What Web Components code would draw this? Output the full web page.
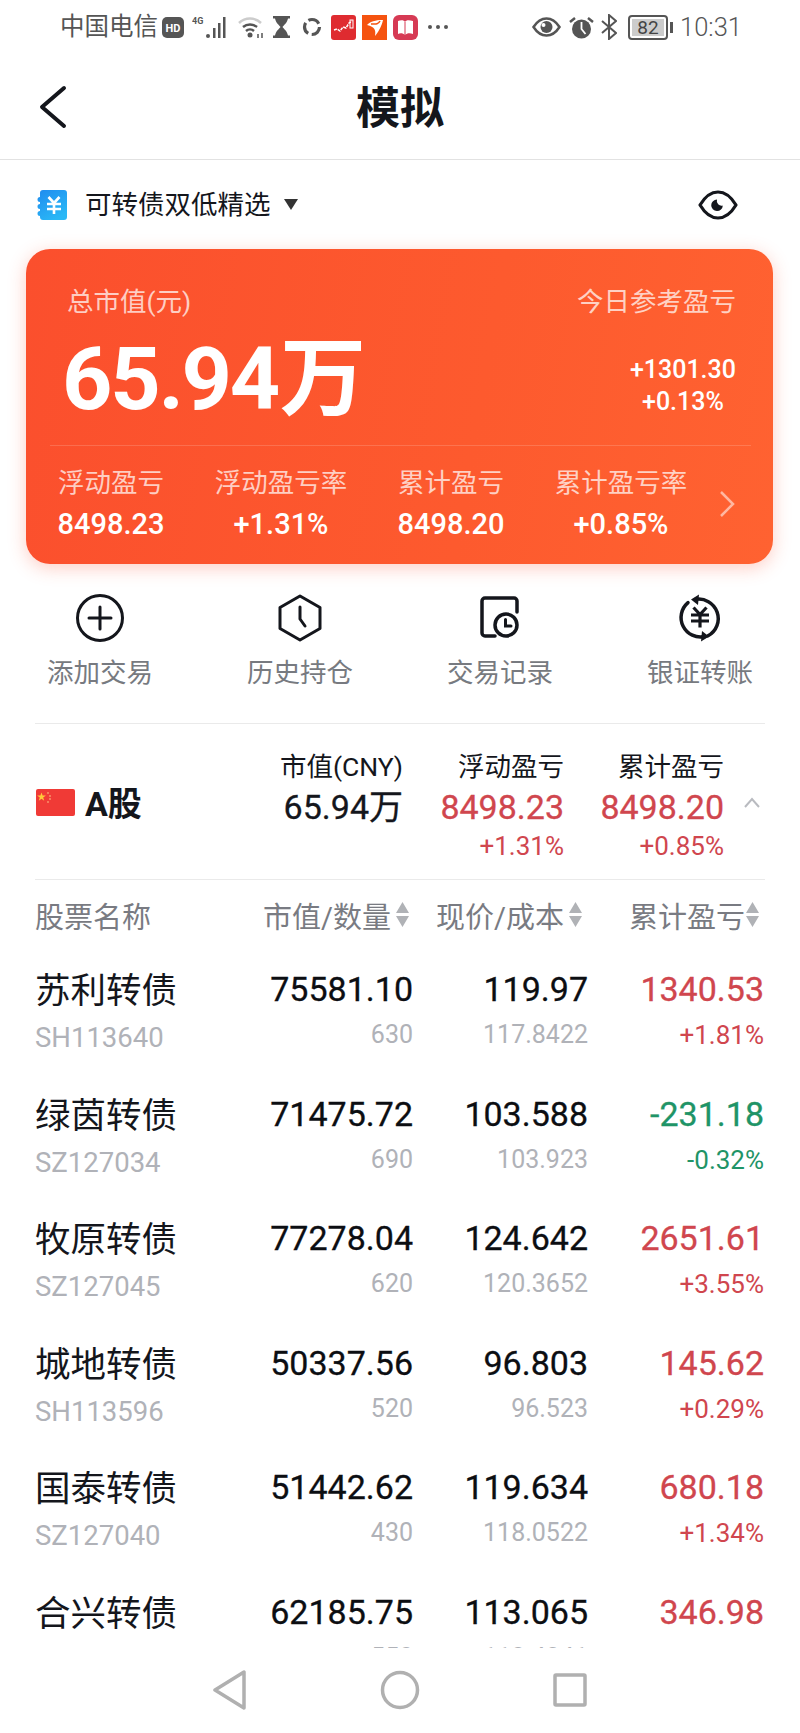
<!DOCTYPE html>
<html lang="zh">
<head>
<meta charset="utf-8">
<title>模拟</title>
<style>
    html, body { margin: 0; height: 100%; background: #fff; }
    body {
        width: 800px;
        height: 1733px;
        overflow: hidden;
        display: flex;
        flex-direction: column;
        font-family: Roboto, "Noto Sans CJK SC", sans-serif;
        color: #14161c;
    }
    .scroller { flex: 1; min-height: 0; overflow: hidden; padding: 0 35px 0 35px; }
</style>
</head>
<body>
    <status-bar></status-bar>
    <app-header>模拟</app-header>
    <portfolio-select>可转债双低精选</portfolio-select>
    <summary-card></summary-card>
    <action-bar></action-bar>
    <market-summary></market-summary>
    <table-head></table-head>
    <div class="scroller">
        <stock-row code="SH113640" value="75581.10" qty="630" price="119.97" cost="117.8422" pl="1340.53" pct="+1.81%">苏利转债</stock-row>
        <stock-row code="SZ127034" value="71475.72" qty="690" price="103.588" cost="103.923" pl="-231.18" pct="-0.32%" tone="down">绿茵转债</stock-row>
        <stock-row code="SZ127045" value="77278.04" qty="620" price="124.642" cost="120.3652" pl="2651.61" pct="+3.55%">牧原转债</stock-row>
        <stock-row code="SH113596" value="50337.56" qty="520" price="96.803" cost="96.523" pl="145.62" pct="+0.29%">城地转债</stock-row>
        <stock-row code="SZ127040" value="51442.62" qty="430" price="119.634" cost="118.0522" pl="680.18" pct="+1.34%">国泰转债</stock-row>
        <stock-row code="" value="62185.75" qty="550" price="113.065" cost="112.4341" pl="346.98" pct="+0.56%">合兴转债</stock-row>
    </div>
    <nav-bar></nav-bar>

<script>
class StatusBar extends HTMLElement {
    constructor() {
        super();
        this.attachShadow({ mode: 'open' }).innerHTML = `
            <style>
                :host { display: flex; align-items: center; height: 54px; padding: 0 58px 0 60px; color: #555; flex: none; box-sizing: border-box; }
                .carrier { font-size: 24.500px; line-height: 54px; width: 100px; }
                .time { font-size: 25.500px; margin-left: 6px; font-weight: 300; }
                svg { display: block; flex: none; }
                .spacer { flex: 1; }
            </style>
            <span class="carrier">中国电信</span>
            <svg width="22" height="21" viewBox="0 0 22 21" style="margin-left:2px"><rect width="22" height="21" rx="5" fill="#555"/><text x="11" y="15" font-size="11" font-weight="700" fill="#fff" text-anchor="middle" font-family="Roboto">HD</text></svg>
            <svg width="38" height="24" viewBox="0 0 38 24" style="margin-left:8px"><text x="0" y="9" font-size="9" font-weight="700" fill="#555" font-family="Roboto">4G</text><g fill="#555"><circle cx="16" cy="21" r="2"/><rect x="21" y="13" width="2.500" height="10"/><rect x="26" y="8" width="2.500" height="15"/><rect x="31" y="2" width="2.500" height="21"/></g></svg>
            <svg width="28" height="24" viewBox="0 0 28 24" style="margin-left:7px" fill="none"><path d="M2 8 A16 16 0 0 1 24 8" stroke="#ccc" stroke-width="2.500"/><path d="M6 12 A11 11 0 0 1 20 12" stroke="#555" stroke-width="2.500"/><path d="M9 16 A6 6 0 0 1 17 16" stroke="#555" stroke-width="2.500"/><circle cx="13" cy="20" r="2.500" fill="#555"/><path d="M21 19v4M25 18v5" stroke="#555" stroke-width="1.500"/></svg>
            <svg width="17" height="24" viewBox="0 0 17 24" style="margin-left:8px"><path d="M0 1h17v2.500h-2C14 8 11 10 9.500 12 11 14 14 16 15 20.500h2V23H0v-2.500h2C3 16 6 14 7.500 12 6 10 3 8 2 3.500H0z" fill="#555"/></svg>
            <svg width="20" height="20" viewBox="0 0 20 20" style="margin-left:12px" fill="none" stroke="#555" stroke-width="3.200"><circle cx="10" cy="10" r="7.500" stroke-dasharray="12 3.700"/></svg>
            <svg width="25" height="25" viewBox="0 0 25 25" style="margin-left:9px"><rect width="25" height="25" rx="3" fill="#df2b30"/><path d="M3 15l3-1 3 2 3-4 3 1 3-5 3-2" stroke="#fff" stroke-width="1.500" fill="none" stroke-dasharray="3 1"/><rect x="19" y="5" width="3" height="8" fill="none" stroke="#fff"/></svg>
            <svg width="25" height="25" viewBox="0 0 25 25" style="margin-left:6px"><rect width="25" height="25" fill="#f5530f"/><path d="M5 10C10 5 17 5 21 5 20 11 15 19 13 21 14 15 13 12 5 10z" fill="#fff"/><path d="M9 9c4 0 7 1 9-3" stroke="#f5530f" stroke-width="1.500" fill="none"/></svg>
            <svg width="25" height="25" viewBox="0 0 25 25" style="margin-left:6px"><rect width="25" height="25" rx="6" fill="#d63a54"/><path d="M5 6c3-1 6-1 7 1 1-2 4-2 8-1v13c-3-1-6-1-8 1-2-2-5-2-7-1z" fill="#fff"/><path d="M12 7v13" stroke="#d63a54"/></svg>
            <svg width="20" height="4" viewBox="0 0 20 4" style="margin-left:10px" fill="#555"><circle cx="2" cy="2" r="2"/><circle cx="10" cy="2" r="2"/><circle cx="18" cy="2" r="2"/></svg>
            <span class="spacer"></span>
            <svg width="29" height="20" viewBox="0 0 29 20"><path d="M1.500 10C6 3 10 1.500 14.500 1.500S23 3 27.500 10C23 17 19 18.500 14.500 18.500S6 17 1.500 10z" fill="none" stroke="#555" stroke-width="2.500"/><circle cx="14.500" cy="10" r="6" fill="#555"/><circle cx="11.500" cy="8" r="2" fill="#fff"/></svg>
            <svg width="25" height="25" viewBox="0 0 25 25" style="margin-left:8px"><circle cx="12.500" cy="14" r="9.500" fill="#555"/><path d="M12.500 7v7l4 5" stroke="#fff" stroke-width="1.800" fill="none"/><path d="M1 7l5-4M24 7l-5-4" stroke="#555" stroke-width="2.500"/></svg>
            <svg width="16" height="26" viewBox="0 0 16 26" style="margin-left:7px" fill="none" stroke="#555" stroke-width="2"><path d="M1 7l14 12-7 6V1l7 6L1 19"/></svg>
            <svg width="46" height="25" viewBox="0 0 46 25" style="margin-left:11px"><rect x="1" y="1" width="38" height="23" rx="3" fill="#fff" stroke="#555" stroke-width="2"/><rect x="4" y="4" width="32" height="17" fill="#ccc"/><text x="20" y="19" font-size="19" fill="#444" text-anchor="middle" font-family="Roboto">82</text><rect x="42" y="7" width="3" height="11" fill="#555"/></svg>
            <span class="time">10:31</span>
        `;
    }
}

class AppHeader extends HTMLElement {
    constructor() {
        super();
        this.attachShadow({ mode: 'open' }).innerHTML = `
            <style>
                :host { display: flex; align-items: flex-start; justify-content: center; position: relative; height: 105px; flex: none; border-bottom: 1px solid #e2e2e2; }
                .title { display: block; font-size: 44px; font-weight: 700; line-height: 99px; padding-top: 6px; }
                svg { position: absolute; left: 38px; top: 31px; }
            </style>
            <svg width="30" height="44" viewBox="0 0 30 44" fill="none" stroke="#14161c" stroke-width="4" stroke-linecap="round" stroke-linejoin="round"><path d="M26 3 4 22l22 19"/></svg>
            <span class="title"><slot></slot></span>
        `;
    }
}

class PortfolioSelect extends HTMLElement {
    constructor() {
        super();
        this.attachShadow({ mode: 'open' }).innerHTML = `
            <style>
                :host { display: flex; align-items: center; height: 89px; padding: 0 62px 0 37px; flex: none; }
                .name { font-size: 26.500px; margin-left: 18px; line-height: 40px; }
                .caret { margin-left: 13px; }
                .spacer { flex: 1; }
                svg { display: block; }
            </style>
            <svg width="30" height="30" viewBox="0 0 30 30">
                <defs><linearGradient id="tk" x1="0" y1="0" x2=".6" y2="1"><stop offset="0" stop-color="#1f8bef"/><stop offset="1" stop-color="#2ab8f6"/></linearGradient></defs>
                <path d="M6 0h21a3 3 0 0 1 3 3v24a3 3 0 0 1-3 3H6a3 3 0 0 1-3-3v-1a2.500 2.500 0 0 1 0-5v-2a2.500 2.500 0 0 1 0-5v-2a2.500 2.500 0 0 1 0-5V3a3 3 0 0 1 3-3z" fill="url(#tk)"/>
                <path d="M11.500 7l5.500 6 5.500-6M10 14h14M10 19h14M17 13v11" fill="none" stroke="#fff" stroke-width="2.600"/>
            </svg>
            <span class="name"><slot></slot></span>
            <svg class="caret" width="14" height="11" viewBox="0 0 14 11"><path d="M0 0h14L7 11z" fill="#333"/></svg>
            <span class="spacer"></span>
            <svg width="40" height="30" viewBox="0 0 40 30" fill="none"><path d="M2 15C8 5 14 2 20 2s12 3 18 13c-6 10-12 13-18 13S8 25 2 15z" stroke="#14161c" stroke-width="3.200" stroke-linejoin="round"/><path d="M19 9.500a5.800 5.800 0 1 0 5.800 6 4.800 4.800 0 0 1-5.800-6z" fill="#14161c"/></svg>
        `;
    }
}

class SummaryStat extends HTMLElement {
    constructor() {
        super();
        this.attachShadow({ mode: 'open' }).innerHTML = `
            <style>
                :host { display: block; text-align: center; }
                .label { font-size: 26.500px; line-height: 36px; color: rgba(255,255,255,.72); }
                .value { font-size: 29px; line-height: 36px; margin-top: 5px; font-weight: 500; color: #fff; }
            </style>
            <div class="label"></div>
            <div class="value"><slot></slot></div>
        `;
        this.shadowRoot.querySelector('.label').textContent = this.getAttribute('label');
    }
}

class SummaryCard extends HTMLElement {
    constructor() {
        super();
        this.attachShadow({ mode: 'open' }).innerHTML = `
            <style>
                :host { display: block; flex: none; box-sizing: border-box; width: 747px; height: 315px; margin-left: 26px; border-radius: 24px; color: #fff;
                    background: linear-gradient(100deg, #fb4f2d 0%, #fd5a2e 60%, #ff6231 100%);
                    box-shadow: 0 4px 18px rgba(251, 80, 45, .28); }
                .top { display: flex; justify-content: space-between; padding: 35px 37px 0 41px; height: 161px; box-sizing: content-box; }
                .label { font-size: 26.500px; line-height: 36px; color: rgba(255,255,255,.72); }
                .big { display: flex; align-items: baseline; font-size: 88px; font-weight: 700; line-height: 90px; margin: 14px 0 0 -5px; letter-spacing: -2.300px; }
                .big .unit { font-size: 86px; letter-spacing: 0; margin-left: 2px; }
                .right { text-align: right; }
                .todays { display: inline-block; text-align: center; margin-top: 34px; }
                .today { font-size: 25px; font-weight: 500; line-height: 32px; }
                hr { border: 0; height: 1px; background: rgba(255,255,255,.16); margin: 0 22px 0 24px; }
                .stats { display: grid; grid-template-columns: repeat(4, 170px) 1fr; padding-top: 19px; position: relative; }
                .arrow { justify-self: start; align-self: center; margin-left: 12px; }
            </style>
            <div class="top">
                <div>
                    <div class="label">总市值(元)</div>
                    <div class="big">65.94<span class="unit">万</span></div>
                </div>
                <div class="right">
                    <div class="label">今日参考盈亏</div>
                    <div class="todays">
                        <div class="today">+1301.30</div>
                        <div class="today">+0.13%</div>
                    </div>
                </div>
            </div>
            <hr>
            <div class="stats">
                <summary-stat label="浮动盈亏">8498.23</summary-stat>
                <summary-stat label="浮动盈亏率">+1.31%</summary-stat>
                <summary-stat label="累计盈亏">8498.20</summary-stat>
                <summary-stat label="累计盈亏率">+0.85%</summary-stat>
                <svg class="arrow" width="18" height="28" viewBox="0 0 18 28" fill="none" stroke="rgba(255,255,255,.55)" stroke-width="2.500"><path d="M3 2l12 12L3 26"/></svg>
            </div>
        `;
    }
}

class ActionItem extends HTMLElement {
    constructor() {
        super();
        this.attachShadow({ mode: 'open' }).innerHTML = `
            <style>
                :host { display: flex; flex-direction: column; align-items: center; }
                .icon { height: 50px; }
                .label { font-size: 26.500px; line-height: 36px; color: #777a80; margin-top: 12px; }
            </style>
            <div class="icon"><slot name="icon"></slot></div>
            <div class="label"><slot></slot></div>
        `;
    }
}

class ActionBar extends HTMLElement {
    constructor() {
        super();
        this.attachShadow({ mode: 'open' }).innerHTML = `
            <style>
                :host { display: grid; grid-template-columns: repeat(4, 200px); flex: none; box-sizing: content-box; height: 130px; padding-top: 29px; }
                svg { display: block; }
            </style>
            <action-item>
                <svg slot="icon" width="50" height="50" viewBox="0 0 50 50" fill="none" stroke="#14161c" stroke-width="3"><circle cx="25" cy="25" r="22.500"/><path d="M14 25h22M25 14v22" stroke-linecap="round"/></svg>
                添加交易
            </action-item>
            <action-item>
                <svg slot="icon" width="50" height="50" viewBox="0 0 50 50" fill="none" stroke="#14161c" stroke-width="3" stroke-linejoin="round"><path d="M25 3l20 11.500v21L25 47 5 35.500v-21z"/><path d="M25 14v12l5 7" stroke-linecap="round"/></svg>
                历史持仓
            </action-item>
            <action-item>
                <svg slot="icon" width="50" height="50" viewBox="0 0 50 50" fill="none" stroke="#14161c" stroke-width="3.500" stroke-linecap="round"><path d="M20 43h-10a3 3 0 0 1-3-3V8a3 3 0 0 1 3-3h29a3 3 0 0 1 3 3v11"/><circle cx="31" cy="32" r="11"/><path d="M30.500 26.500v6.500h5.500" stroke-width="3"/></svg>
                交易记录
            </action-item>
            <action-item>
                <svg slot="icon" width="50" height="50" viewBox="0 0 50 50" fill="none" stroke="#14161c" stroke-width="3.500" stroke-linecap="round"><path d="M20 6.500A19.500 19.500 0 0 1 33 42.800"/><path d="M30 43.500A19.500 19.500 0 0 1 13 9.600"/><path d="M24 1.500 16 6.500l7 5.500zM26 48.500l8-5-7-5.500z" fill="#14161c" stroke="none"/><path d="M18.500 14.500l6.500 7 6.500-7M16 22h18M16 28h18M25 21.500v13" stroke-width="3.200" stroke-linecap="butt"/></svg>
                银证转账
            </action-item>
        `;
    }
}

class MarketSummary extends HTMLElement {
    constructor() {
        super();
        this.attachShadow({ mode: 'open' }).innerHTML = `
            <style>
                :host { display: flex; flex: none; margin: 0 35px; box-sizing: border-box; height: 157px; border-top: 1px solid #eaeaea; border-bottom: 1px solid #eaeaea; position: relative; }
                .market { display: flex; align-items: center; gap: 10px; width: 200px; height: 160px; font-size: 34px; font-weight: 700; }
                .market span { line-height: 40px; }
                .market svg { margin: 0 0 3px 1px; }
                svg { display: block; }
                .col { text-align: right; box-sizing: border-box; }
                .head { font-size: 26.500px; line-height: 36px; margin-top: 25px; }
                .num { font-size: 34px; line-height: 44px; -webkit-text-stroke: .3px; }
                .pct { font-size: 26px; line-height: 32px; margin-top: 1px; color: #d0464e; }
                .c1 { width: 168px; }
                .c2 { width: 161px; } .c3 { width: 160px; }
                .red { color: #d0464e; }
                .chev { position: absolute; right: 4px; top: 73px; }
            </style>
            <div class="market">
                <svg width="39" height="27" viewBox="0 0 39 27"><rect width="39" height="27" rx="2" fill="#f03a36"/><path d="M5.500 3.500l1.100 3.100h3.300l-2.700 2 1 3.100-2.700-1.900-2.700 1.900 1-3.100-2.700-2h3.300z" fill="#ffc93a"/><g fill="#f9906a"><circle cx="12" cy="4" r="1"/><circle cx="14" cy="7" r="1"/><circle cx="14" cy="10" r="1"/><circle cx="12" cy="13" r="1"/></g></svg>
                <span>A股</span>
            </div>
            <div class="col c1"><div class="head">市值(CNY)</div><div class="num">65.94万</div></div>
            <div class="col c2"><div class="head">浮动盈亏</div><div class="num red">8498.23</div><div class="pct">+1.31%</div></div>
            <div class="col c3"><div class="head">累计盈亏</div><div class="num red">8498.20</div><div class="pct">+0.85%</div></div>
            <svg class="chev" width="18" height="12" viewBox="0 0 18 12" fill="none" stroke="#b9bbc0" stroke-width="2"><path d="M2 10l7-8 7 8"/></svg>
        `;
    }
}

class SortLabel extends HTMLElement {
    constructor() {
        super();
        this.attachShadow({ mode: 'open' }).innerHTML = `
            <style>
                :host { display: inline-flex; align-items: center; gap: var(--gap, 5px); }
                svg { display: block; }
            </style>
            <span><slot></slot></span>
            <svg width="13" height="25" viewBox="0 0 13 25" fill="#b0b2b6"><path d="M6.500 0 13 11H0zM6.500 25 0 14h13z"/></svg>
        `;
    }
}

class TableHead extends HTMLElement {
    constructor() {
        super();
        this.attachShadow({ mode: 'open' }).innerHTML = `
            <style>
                :host { display: grid; grid-template-columns: 218px 156px 173px 177px; align-items: center; flex: none; height: 73px; padding: 0 35px 4px; box-sizing: border-box; width: 800px; font-size: 29px; color: #797b82; }
                div { text-align: right; }
                .first { text-align: left; }
            </style>
            <div class="first">股票名称</div>
            <div><sort-label>市值/数量</sort-label></div>
            <div><sort-label>现价/成本</sort-label></div>
            <div><sort-label style="--gap:1px">累计盈亏</sort-label></div>
        `;
    }
}

class StockRow extends HTMLElement {
    constructor() {
        super();
        const a = (n) => this.getAttribute(n) || '';
        const tone = a('tone') === 'down' ? '#1f9467' : '#d0464e';
        this.attachShadow({ mode: 'open' }).innerHTML = `
            <style>
                :host { display: grid; grid-template-columns: 218px 160px 175px 176px; grid-template-rows: 50px 36px; row-gap: 3px; height: 124.6px; padding-top: 11px; box-sizing: border-box; --tone: ${tone}; }
                .name { font-size: 35.500px; line-height: 54px; color: #14161c; }
                .code { font-size: 27.500px; line-height: 36px; color: #b0b2b8; position: relative; top: 3px; }
                .num { font-size: 34px; line-height: 50px; text-align: right; color: #0c0e12; -webkit-text-stroke: .3px; }
                .sub { font-size: 25px; line-height: 36px; text-align: right; color: #b0b2b8; }
                .tone { color: var(--tone); }
                .sub.tone { font-size: 26px; }
            </style>
            <div class="name"><slot></slot></div>
            <div class="num">${a('value')}</div>
            <div class="num">${a('price')}</div>
            <div class="num tone">${a('pl')}</div>
            <div class="code">${a('code')}</div>
            <div class="sub">${a('qty')}</div>
            <div class="sub">${a('cost')}</div>
            <div class="sub tone">${a('pct')}</div>
        `;
    }
}

class NavBar extends HTMLElement {
    constructor() {
        super();
        this.attachShadow({ mode: 'open' }).innerHTML = `
            <style>
                :host { display: flex; align-items: center; justify-content: center; flex: none; height: 85px; background: #fff; padding-bottom: 2px; box-sizing: border-box; }
                svg { display: block; }
            </style>
            <svg width="187" height="40" viewBox="0 0 187 40" fill="none" stroke="#b0b0b0" stroke-width="3.500" stroke-linejoin="round"><path d="M51 2v36L22 20z"/></svg>
            <svg width="40" height="40" viewBox="0 0 40 40" fill="none" stroke="#b0b0b0" stroke-width="3.500"><circle cx="20" cy="20" r="17.500"/></svg>
            <svg width="187" height="40" viewBox="0 0 187 40" fill="none" stroke="#b0b0b0" stroke-width="3.500" stroke-linejoin="round"><rect x="135" y="5" width="30" height="30" rx="1"/></svg>
        `;
    }
}

customElements.define('status-bar', StatusBar);
customElements.define('app-header', AppHeader);
customElements.define('portfolio-select', PortfolioSelect);
customElements.define('summary-stat', SummaryStat);
customElements.define('summary-card', SummaryCard);
customElements.define('action-item', ActionItem);
customElements.define('action-bar', ActionBar);
customElements.define('market-summary', MarketSummary);
customElements.define('sort-label', SortLabel);
customElements.define('table-head', TableHead);
customElements.define('stock-row', StockRow);
customElements.define('nav-bar', NavBar);
</script>
</body>
</html>
